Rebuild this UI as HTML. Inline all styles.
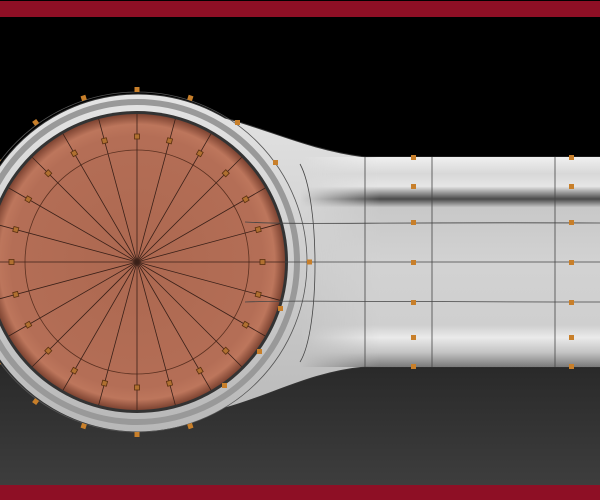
<!DOCTYPE html>
<html><head><meta charset="utf-8"><style>
html,body{margin:0;padding:0;width:600px;height:500px;overflow:hidden;background:#000}
svg{display:block}
</style></head><body>
<svg width="600" height="500" viewBox="0 0 600 500" xmlns="http://www.w3.org/2000/svg">
<defs>
<linearGradient id="bg" x1="0" y1="0" x2="0" y2="1">
<stop offset="0" stop-color="#000"/><stop offset="0.66" stop-color="#000"/>
<stop offset="0.74" stop-color="#2a2a2a"/><stop offset="1" stop-color="#404040"/>
</linearGradient>
<linearGradient id="arm" x1="0" y1="0" x2="0" y2="1">
<stop offset="0" stop-color="#f0f0f0"/><stop offset="0.08" stop-color="#d8d8d8"/>
<stop offset="0.14" stop-color="#e6e6e6"/><stop offset="0.2" stop-color="#4a4a4a"/>
<stop offset="0.24" stop-color="#c8c8c8"/><stop offset="0.5" stop-color="#d2d2d2"/>
<stop offset="0.8" stop-color="#cfcfcf"/><stop offset="0.86" stop-color="#eaeaea"/>
<stop offset="0.93" stop-color="#c4c4c4"/><stop offset="1" stop-color="#7a7a7a"/>
</linearGradient>
<linearGradient id="fade" x1="0" y1="0" x2="1" y2="0">
<stop offset="0" stop-color="#000"/><stop offset="1" stop-color="#fff"/>
</linearGradient>
<mask id="m"><rect x="0" y="0" width="600" height="500" fill="#fff"/><rect x="300" y="150" width="80" height="230" fill="url(#fade)"/><rect x="0" y="0" width="300" height="500" fill="#000"/></mask>
<linearGradient id="body" x1="0" y1="0" x2="0" y2="1">
<stop offset="0" stop-color="#e4e4e4"/><stop offset="1" stop-color="#b8b8b8"/>
</linearGradient>
<radialGradient id="disk" cx="0.5" cy="0.5" r="0.5">
<stop offset="0" stop-color="#ac6850"/><stop offset="0.85" stop-color="#b46e56"/>
<stop offset="0.93" stop-color="#bd765c"/><stop offset="1" stop-color="#7e4432"/>
</radialGradient>
</defs>
<rect width="600" height="500" fill="url(#bg)"/>
<rect x="0" y="1" width="600" height="16" fill="#8e0f25"/>
<rect x="0" y="485" width="600" height="15" fill="#8e0f25"/>

<path d="M600,157 L365,157 C310,150 270,130 225,118 A169,169 0 1 0 225,408 C270,396 310,372 365,367 L600,367 Z" fill="url(#body)" stroke="#333" stroke-width="1"/>
<rect x="300" y="157" width="300" height="210" fill="url(#arm)" mask="url(#m)"/>
<circle cx="137" cy="262" r="160" fill="none" stroke="#999" stroke-width="6"/>
<circle cx="137" cy="262" r="151" fill="#333"/>
<circle cx="137" cy="262" r="148" fill="url(#disk)"/>
<circle cx="137" cy="262" r="112" fill="none" stroke="#5a3020" stroke-width="0.8"/>
<circle cx="137" cy="262" r="170" fill="none" stroke="#555" stroke-width="0.8"/>

<g stroke="#444" stroke-width="0.8" fill="none">
<line x1="432" y1="157" x2="432" y2="367"/><line x1="555" y1="157" x2="555" y2="367"/>
<line x1="365" y1="157" x2="365" y2="367"/>
<path d="M245,222 C300,225 360,222 600,223"/><path d="M285,262 L600,262"/>
<path d="M245,302 C300,300 360,302 600,302"/>
<path d="M300,164 C320,200 320,330 300,362"/>
</g>

<g transform="translate(137,262)" stroke="#3a2018" stroke-width="0.8">
<g id="sp"><line x1="0" y1="0" x2="148" y2="0"/><rect x="123" y="-2.5" width="5" height="5" fill="#b07030" stroke="#5a3010"/></g>
<use href="#sp" transform="rotate(15)"/><use href="#sp" transform="rotate(30)"/><use href="#sp" transform="rotate(45)"/>
<use href="#sp" transform="rotate(60)"/><use href="#sp" transform="rotate(75)"/><use href="#sp" transform="rotate(90)"/>
<use href="#sp" transform="rotate(105)"/><use href="#sp" transform="rotate(120)"/><use href="#sp" transform="rotate(135)"/>
<use href="#sp" transform="rotate(150)"/><use href="#sp" transform="rotate(165)"/><use href="#sp" transform="rotate(180)"/>
<use href="#sp" transform="rotate(195)"/><use href="#sp" transform="rotate(210)"/><use href="#sp" transform="rotate(225)"/>
<use href="#sp" transform="rotate(240)"/><use href="#sp" transform="rotate(255)"/><use href="#sp" transform="rotate(270)"/>
<use href="#sp" transform="rotate(285)"/><use href="#sp" transform="rotate(300)"/><use href="#sp" transform="rotate(315)"/>
<use href="#sp" transform="rotate(330)"/><use href="#sp" transform="rotate(345)"/>
<g fill="#c87f2a" stroke="none">
<g id="od"><rect x="170" y="-2.5" width="5" height="5"/></g>
<use href="#od" transform="rotate(90)"/><use href="#od" transform="rotate(108)"/><use href="#od" transform="rotate(126)"/>
<use href="#od" transform="rotate(144)"/><use href="#od" transform="rotate(162)"/><use href="#od" transform="rotate(180)"/>
<use href="#od" transform="rotate(198)"/><use href="#od" transform="rotate(216)"/><use href="#od" transform="rotate(234)"/>
<use href="#od" transform="rotate(252)"/><use href="#od" transform="rotate(270)"/><use href="#od" transform="rotate(288)"/>
<use href="#od" transform="rotate(72)"/>
</g>
</g>
<g fill="#c87f2a">
<rect x="235" y="120" width="5" height="5"/><rect x="411" y="155" width="5" height="5"/><rect x="569" y="155" width="5" height="5"/>
<rect x="411" y="184" width="5" height="5"/><rect x="569" y="184" width="5" height="5"/>
<rect x="411" y="220" width="5" height="5"/><rect x="569" y="220" width="5" height="5"/>
<rect x="411" y="260" width="5" height="5"/><rect x="569" y="260" width="5" height="5"/>
<rect x="411" y="300" width="5" height="5"/><rect x="569" y="300" width="5" height="5"/>
<rect x="411" y="335" width="5" height="5"/><rect x="569" y="335" width="5" height="5"/>
<rect x="411" y="364" width="5" height="5"/><rect x="569" y="364" width="5" height="5"/>
<rect x="273" y="160" width="5" height="5"/><rect x="278" y="306" width="5" height="5"/>
<rect x="257" y="349" width="5" height="5"/><rect x="222" y="383" width="5" height="5"/>
</g>
</svg>
</body></html>
